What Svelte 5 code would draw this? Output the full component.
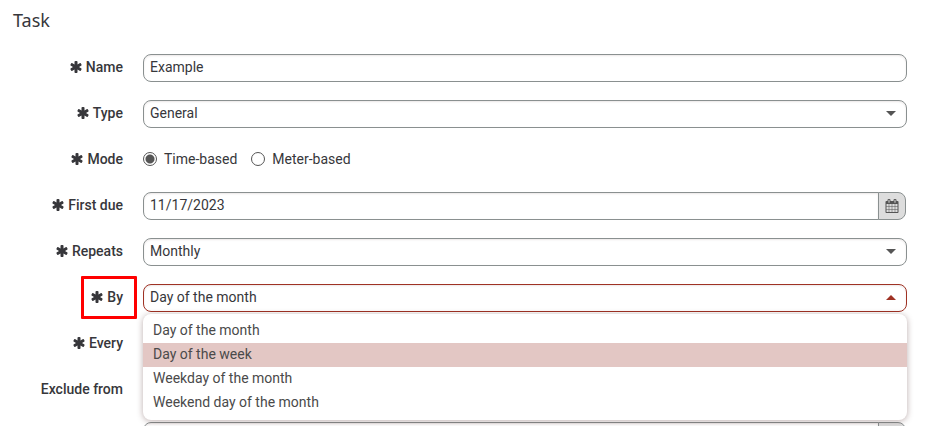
<script>
  let name = $state('Example');
  let mode = $state('time');
  let firstDue = $state('11/17/2023');
  let every = $state('');
  let until = $state('');
  let by = $state('Day of the month');
  let active = $state('Day of the week');
  let open = $state(true);

  const byOptions = [
    'Day of the month',
    'Day of the week',
    'Weekday of the month',
    'Weekend day of the month',
  ];

  function pick(option) {
    by = option;
    open = false;
  }

  function toggle(event) {
    event.preventDefault();
    open = !open;
  }
</script>

{#snippet star()}
  <svg class="star" viewBox="128 0 1536 1792" aria-hidden="true">
    <path d="M1546 1050q46 26 59.5 77.5t-12.5 97.5l-64 110q-26 46-77.5 59.5t-97.5-12.5l-266-153v307q0 52-38 90t-90 38h-128q-52 0-90-38t-38-90v-307l-266 153q-46 26-97.5 12.5t-77.5-59.5l-64-110q-26-46-12.5-97.5t59.5-77.5l266-154-266-154q-46-26-59.5-77.5t12.5-97.5l64-110q26-46 77.5-59.5t97.5 12.5l266 153v-307q0-52 38-90t90-38h128q52 0 90 38t38 90v307l266-153q46-26 97.5-12.5t77.5 59.5l64 110q26 46 12.5 97.5t-59.5 77.5l-266 154z" />
  </svg>
{/snippet}

{#snippet calendar()}
  <svg class="calendar" viewBox="0 0 1792 1792" aria-hidden="true">
    <path d="M192 1664h288v-288h-288v288zm352 0h320v-288h-320v288zm-352-352h288v-320h-288v320zm352 0h320v-320h-320v320zm-352-384h288v-288h-288v288zm736 736h320v-288h-320v288zm-384-736h320v-288h-320v288zm768 736h288v-288h-288v288zm-384-352h320v-320h-320v320zm-352-864v-288q0-13-9.5-22.5t-22.5-9.5h-64q-13 0-22.5 9.5t-9.5 22.5v288q0 13 9.5 22.5t22.5 9.5h64q13 0 22.5-9.5t9.5-22.5zm736 864h288v-320h-288v320zm-384-384h320v-288h-320v288zm384 0h288v-288h-288v288zm32-480v-288q0-13-9.5-22.5t-22.5-9.5h-64q-13 0-22.5 9.5t-9.5 22.5v288q0 13 9.5 22.5t22.5 9.5h64q13 0 22.5-9.5t9.5-22.5zm384-64v1280q0 52-38 90t-90 38h-1408q-52 0-90-38t-38-90v-1280q0-52 38-90t90-38h128v-96q0-66 47-113t113-47h64q66 0 113 47t47 113v96h384v-96q0-66 47-113t113-47h64q66 0 113 47t47 113v96h128q52 0 90 38t38 90z" />
  </svg>
{/snippet}

{#snippet caret()}
  <svg class="caret" viewBox="0 0 10 5" aria-hidden="true"><path d="M0 0h10L5 5z" /></svg>
{/snippet}

<main>
  <h1>Task</h1>
  <form>
    <div class="row">
      <label class="label" for="name">{@render star()}Name</label>
      <input class="field" id="name" type="text" bind:value={name} />
    </div>

    <div class="row">
      <label class="label" for="type">{@render star()}Type</label>
      <div class="select">
        <select class="field" id="type"><option>General</option></select>
        {@render caret()}
      </div>
    </div>

    <div class="row" role="radiogroup" aria-labelledby="mode">
      <span class="label" id="mode">{@render star()}Mode</span>
      <div class="radios">
        <label><input type="radio" name="mode" value="time" bind:group={mode} />Time-based</label>
        <label><input type="radio" name="mode" value="meter" bind:group={mode} />Meter-based</label>
      </div>
    </div>

    <div class="row">
      <label class="label" for="first-due">{@render star()}First due</label>
      <div class="date">
        <input class="field" id="first-due" type="text" bind:value={firstDue} />
        <button type="button" aria-label="Choose date">{@render calendar()}</button>
      </div>
    </div>

    <div class="row">
      <label class="label" for="repeats">{@render star()}Repeats</label>
      <div class="select">
        <select class="field" id="repeats"><option>Monthly</option></select>
        {@render caret()}
      </div>
    </div>

    <div class="row">
      <label class="label marked" for="by">{@render star()}By</label>
      <div class="select" class:open>
        <select class="field" id="by" bind:value={by} onmousedown={toggle}>
          {#each byOptions as option}<option>{option}</option>{/each}
        </select>
        {@render caret()}
        {#if open}
          <ul role="listbox" aria-label="By">
            {#each byOptions as option}
              <li role="option" aria-selected={option === active}>
                <button type="button" tabindex="-1" onmouseenter={() => (active = option)} onclick={() => pick(option)}>{option}</button>
              </li>
            {/each}
          </ul>
        {/if}
      </div>
    </div>

    <div class="row">
      <label class="label" for="every">{@render star()}Every</label>
      <input class="field" id="every" type="text" bind:value={every} />
    </div>

    <div class="row">
      <label class="label" for="exclude">Exclude from</label>
      <div class="select">
        <select class="field" id="exclude"><option></option></select>
      </div>
    </div>

    <div class="row">
      <span class="label"></span>
      <div class="date">
        <input class="field" type="text" aria-label="End date" bind:value={until} />
        <button type="button" aria-label="Choose end date">{@render calendar()}</button>
      </div>
    </div>
  </form>
</main>

<style>
  :global(body) {
    margin: 0;
    background: #fff;
  }

  main {
    box-sizing: border-box;
    height: 100vh;
    overflow: hidden;
    padding: 8px 20px 0 13px;
    color: #37373b;
    font: 14px/20px Roboto, sans-serif;
  }

  h1 {
    margin: 0 0 22px;
    font: 18px/24px 'Noto Sans', sans-serif;
  }

  form {
    display: flex;
    flex-direction: column;
    gap: 18px;
  }

  .row {
    display: grid;
    grid-template-columns: 110px minmax(0, 1fr);
    column-gap: 20px;
    align-items: center;
    height: 28px;
  }

  .label {
    position: relative;
    display: flex;
    align-items: center;
    justify-self: end;
    gap: 4px;
    margin-bottom: 2px;
    font-weight: 500;
    white-space: nowrap;
  }

  .star {
    width: 12px;
    height: 14px;
    fill: #37373b;
  }

  .marked::before {
    content: '';
    position: absolute;
    inset: -11px -14px -12px -10px;
    border: 3px solid #f00;
    border-radius: 1px;
  }

  .field {
    box-sizing: border-box;
    width: 100%;
    height: 28px;
    margin: 0;
    padding: 0 6px 2px;
    border: 1px solid #8a9090;
    border-radius: 8px;
    outline: 0;
    background: #fff;
    box-shadow: inset 0 1px 2px rgba(60, 20, 20, 0.1);
    color: #37373b;
    font: inherit;
    appearance: none;
  }

  .select {
    position: relative;
    display: flex;
  }

  .caret {
    position: absolute;
    top: 11px;
    right: 11px;
    width: 10px;
    height: 5px;
    fill: #555;
    pointer-events: none;
  }

  .open .field {
    border-color: #9f3224;
  }

  .open .caret {
    fill: #9f3224;
    rotate: 180deg;
  }

  .radios {
    display: flex;
    gap: 14px;
    margin-bottom: 2px;
  }

  .radios label {
    display: flex;
    align-items: center;
    gap: 7px;
  }

  .radios input {
    box-sizing: border-box;
    width: 14px;
    height: 14px;
    margin: 0;
    border: 1px solid #555;
    border-radius: 50%;
    background: #fff;
    appearance: none;
  }

  .radios input:checked {
    background: radial-gradient(circle, #555 4px, #fff 5px);
  }

  .date {
    display: flex;
    margin-right: 1px;
  }

  .date .field {
    flex: 1;
    min-width: 0;
    border-radius: 8px 0 0 8px;
  }

  .date button {
    display: flex;
    align-items: center;
    justify-content: center;
    box-sizing: border-box;
    width: 28px;
    height: 28px;
    margin-left: -1px;
    padding: 0;
    border: 1px solid #8a9090;
    border-radius: 0 8px 8px 0;
    background: #ddd;
  }

  .calendar {
    width: 14px;
    height: 14px;
    fill: #555;
  }

  ul {
    position: absolute;
    z-index: 1;
    top: 30px;
    left: 0;
    right: 0;
    margin: 0;
    padding: 5px 0;
    border-radius: 8px;
    background: #fff;
    box-shadow: 0 1px 6px rgba(60, 20, 20, 0.35);
    list-style: none;
  }

  li button {
    display: block;
    width: 100%;
    height: 24px;
    padding: 0 10px 2px;
    border: 0;
    background: none;
    color: #4a4a4a;
    font: inherit;
    text-align: left;
  }

  li[aria-selected='true'] button {
    background: #e3c7c4;
  }
</style>
